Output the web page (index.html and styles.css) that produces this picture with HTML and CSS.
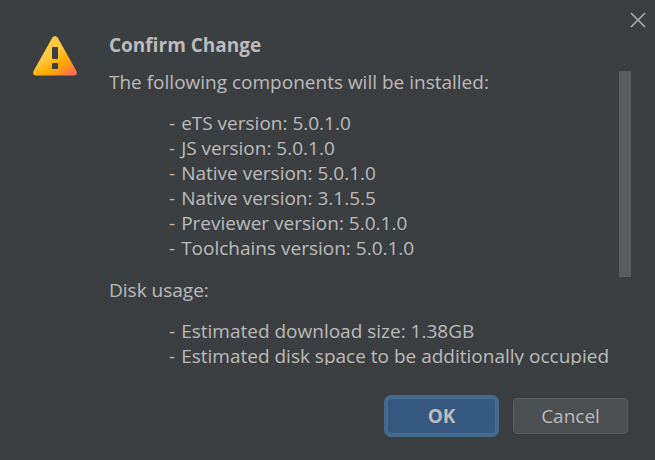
FILE: index.html
```html
<!DOCTYPE html>
<html lang="en">
<head>
    <meta charset="UTF-8">
    <meta name="viewport" content="width=device-width, initial-scale=1.0">
    <title>Confirm Change</title>
    <link rel="stylesheet" href="styles.css">
</head>
<body>
    <div class="dialog" role="dialog" aria-labelledby="title">
        <button class="close" aria-label="Close">
            <svg width="16" height="16" viewBox="0 0 16 16">
                <path d="M1 1 L15 15 M15 1 L1 15" stroke="#afb1b3" stroke-width="1.5" fill="none"/>
            </svg>
        </button>

        <div class="main">
            <svg class="icon" width="44" height="40" viewBox="0 0 44 40">
                <defs>
                    <linearGradient id="warn" gradientUnits="userSpaceOnUse" x1="14" y1="8" x2="37" y2="42">
                        <stop offset="0.25" stop-color="#ffca42"/>
                        <stop offset="0.55" stop-color="#ffaa00"/>
                        <stop offset="0.68" stop-color="#ffa010"/>
                        <stop offset="0.92" stop-color="#ff7050"/>
                    </linearGradient>
                </defs>
                <path d="M19.4 1.5 Q22 -1.5 24.6 1.5 L43.4 35 Q45 39 41 39.5 L3 39.5 Q-1 39 0.6 35 Z" fill="url(#warn)"/>
                <rect x="19" y="11" width="6" height="12" rx="1" fill="#3c3f41"/>
                <rect x="19" y="27" width="6" height="6" rx="1" fill="#3c3f41"/>
            </svg>

            <div class="content">
                <h1 id="title">Confirm Change</h1>
                <div class="scroll">
                    <div class="message">
                        <p>The following components will be installed:</p>
                        <ul>
                            <li>eTS version: 5.0.1.0</li>
                            <li>JS version: 5.0.1.0</li>
                            <li>Native version: 5.0.1.0</li>
                            <li>Native version: 3.1.5.5</li>
                            <li>Previewer version: 5.0.1.0</li>
                            <li>Toolchains version: 5.0.1.0</li>
                        </ul>
                        <p>Disk usage:</p>
                        <ul>
                            <li>Estimated download size: 1.38GB</li>
                            <li>Estimated disk space to be additionally occupied</li>
                        </ul>
                    </div>
                    <div class="scrollbar"><div class="thumb"></div></div>
                </div>
            </div>
        </div>

        <div class="buttons">
            <button class="btn primary">OK</button>
            <button class="btn">Cancel</button>
        </div>
    </div>
</body>
</html>
```

FILE: styles.css
```css
* {
    box-sizing: border-box;
}
body {
    margin: 0;
    background: #3c3f41;
    color: #bbbbbb;
    font-family: "Open Sans", "Noto Sans", sans-serif;
    font-size: 19px;
    line-height: 25px;
}
.dialog {
    display: flex;
    flex-direction: column;
    height: 100vh;
    padding: 12px 0 26px;
}
.close {
    align-self: flex-end;
    width: 16px;
    height: 16px;
    margin-right: 9px;
    padding: 0;
    border: none;
    background: none;
    cursor: pointer;
}
.close svg {
    display: block;
}
.main {
    display: flex;
    flex: 1;
    min-height: 0;
    gap: 32px;
    padding: 5px 24px 0 33px;
}
.icon {
    flex: none;
    margin-top: 3px;
}
.content {
    display: flex;
    flex-direction: column;
    flex: 1;
    min-width: 0;
}
h1 {
    margin: 0 0 12px;
    font-size: 19px;
    line-height: 25px;
    font-weight: 700;
}
.scroll {
    display: flex;
    flex: 1;
    min-height: 0;
}
.message {
    flex: 1;
    min-width: 0;
    overflow: hidden;
    white-space: nowrap;
}
p {
    margin: 0;
}
ul {
    margin: 16px 0 17px;
    padding: 0 0 0 60px;
    list-style: none;
}
li {
    display: flex;
    gap: 6px;
}
li::before {
    content: "-";
}
.scrollbar {
    flex: none;
    width: 12px;
    padding-top: 1px;
}
.thumb {
    height: 70%;
    background: #595b5d;
}
.buttons {
    display: flex;
    justify-content: flex-end;
    gap: 17px;
    padding: 33px 27px 0 0;
}
.btn {
    width: 115px;
    height: 36px;
    padding: 0;
    border: 1px solid #5e6060;
    border-radius: 4px;
    background: #4c5052;
    box-shadow: 0 1px 1px #36383a;
    color: #bbbbbb;
    font: inherit;
    cursor: pointer;
}
.primary {
    width: 109px;
    border-color: #4c708c;
    background: #365880;
    box-shadow: 0 0 0 3px #43698e;
    font-weight: 700;
}
```
